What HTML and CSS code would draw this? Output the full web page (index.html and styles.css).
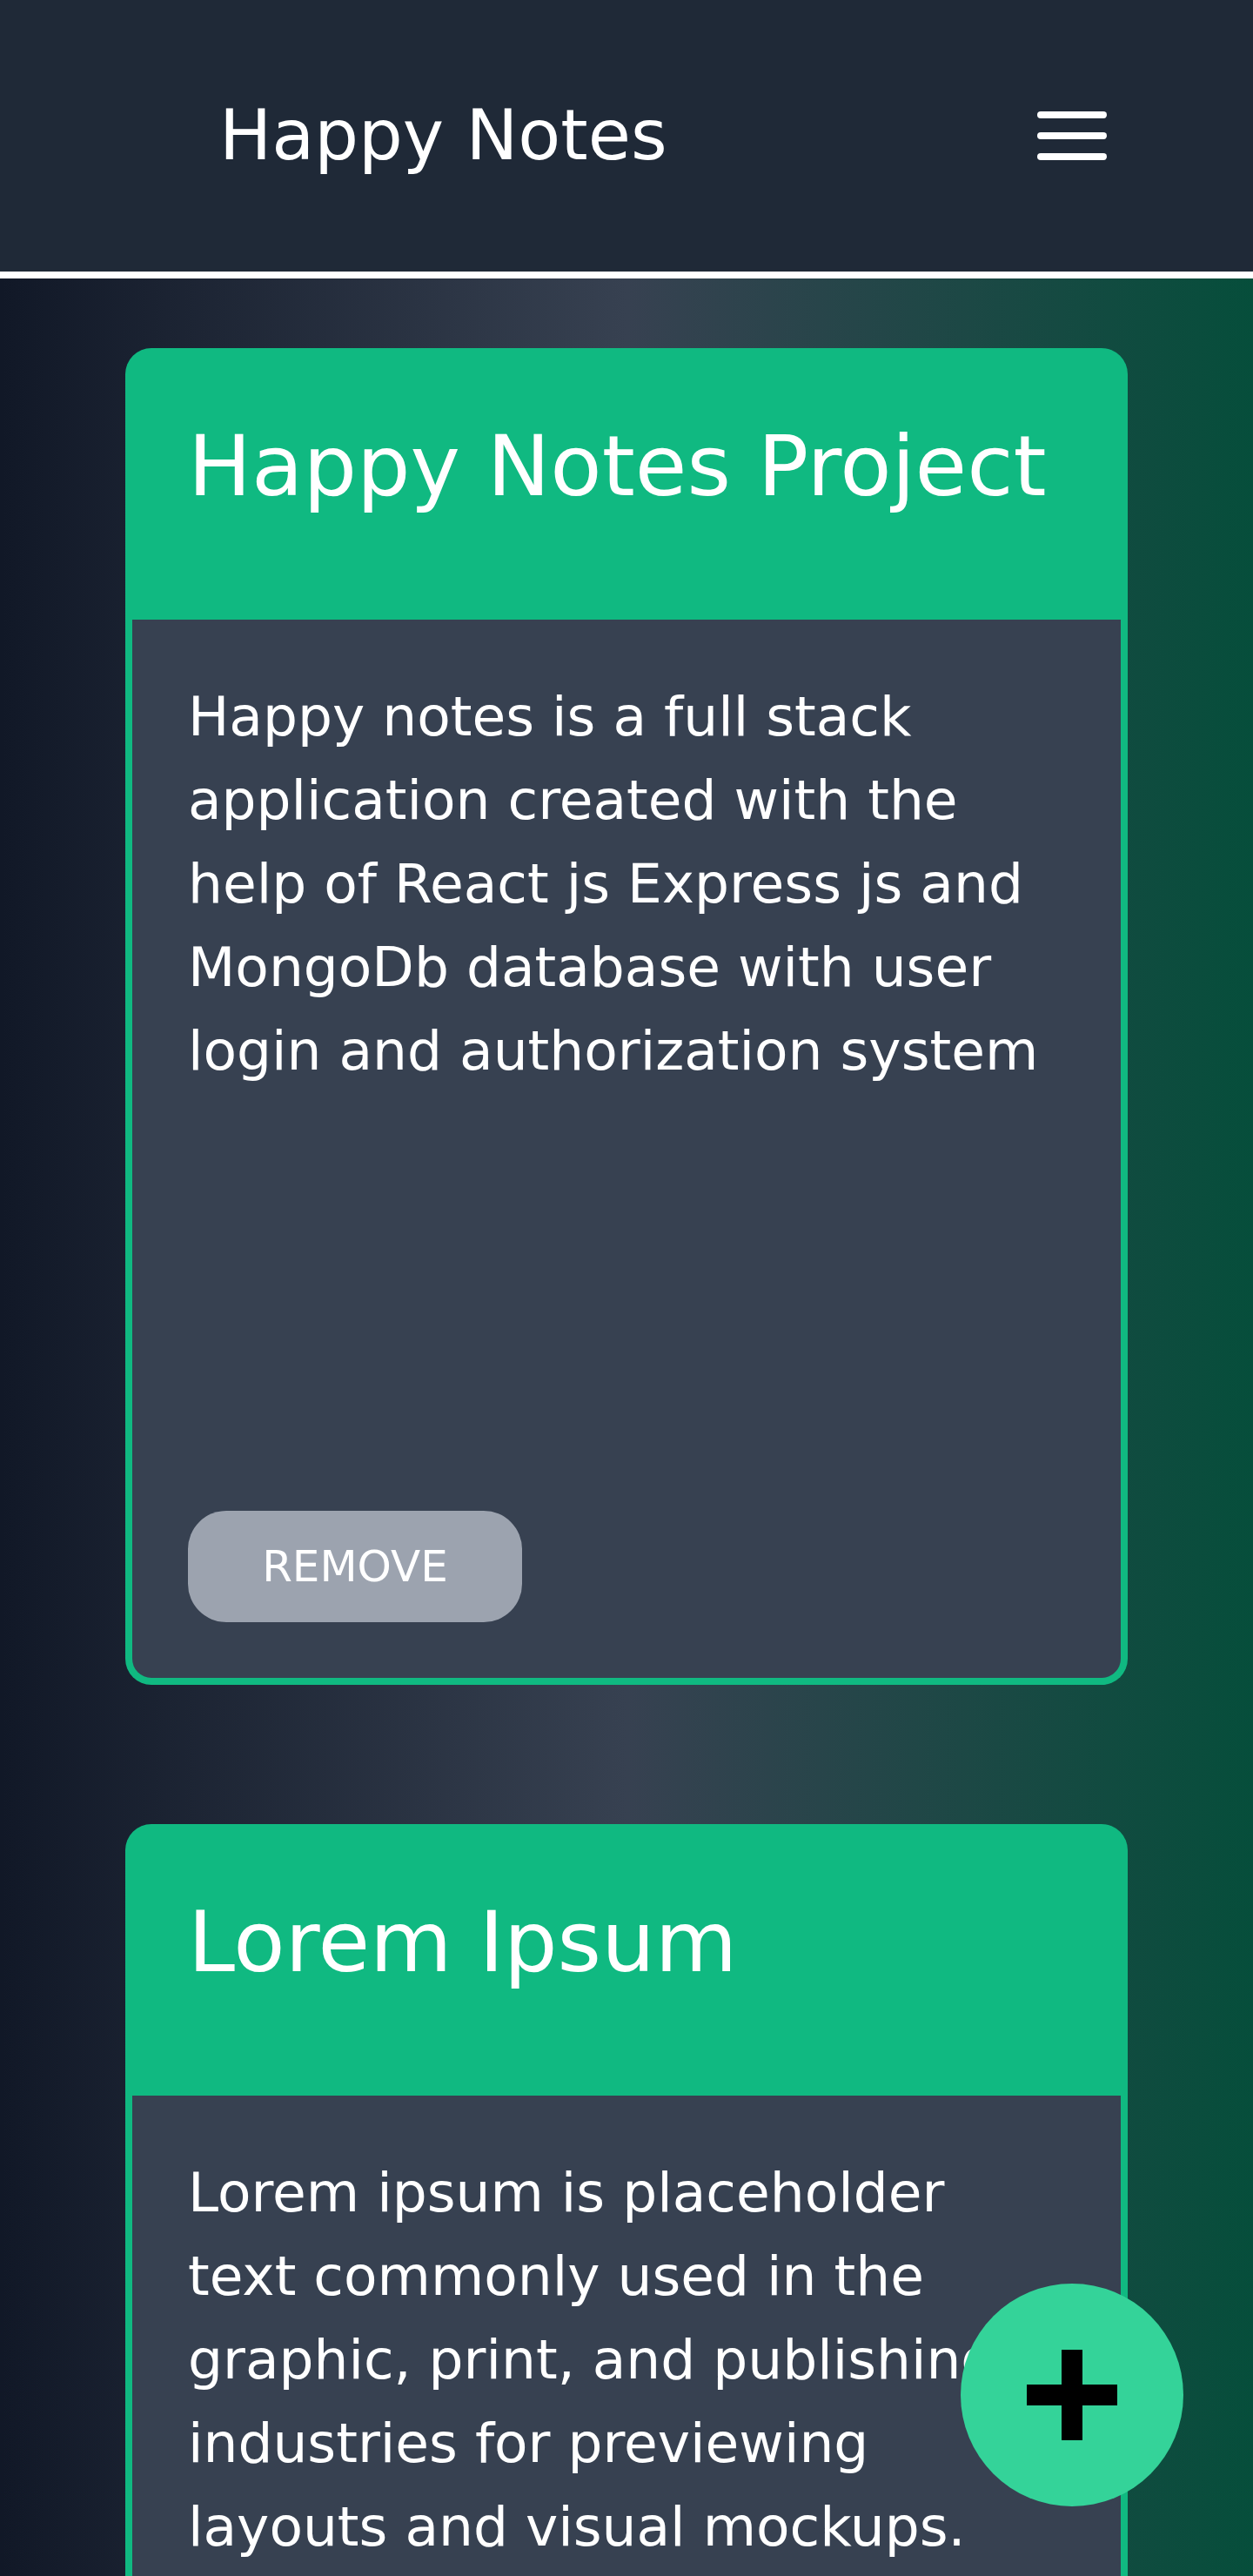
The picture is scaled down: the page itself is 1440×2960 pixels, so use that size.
FILE: index.html
```html
<!DOCTYPE html>
<html lang="en">
<head>
<meta charset="utf-8">
<title>Happy Notes</title>
<link rel="stylesheet" href="styles.css">
</head>
<body>
  <header class="topbar">
    <h1 class="brand">Happy Notes</h1>
    <button class="menu" aria-label="Menu">
      <span class="menu-bar"></span>
      <span class="menu-bar"></span>
      <span class="menu-bar"></span>
    </button>
  </header>

  <main class="notes">
    <article class="note">
      <div class="note-head">
        <h2 class="note-title">Happy Notes Project</h2>
      </div>
      <div class="note-body">
        <p class="note-text">Happy notes is a full stack application created with the help of React js Express js and MongoDb database with user login and authorization system</p>
        <button class="remove">REMOVE</button>
      </div>
    </article>

    <article class="note">
      <div class="note-head">
        <h2 class="note-title">Lorem Ipsum</h2>
      </div>
      <div class="note-body">
        <p class="note-text">Lorem ipsum is placeholder text commonly used in the graphic, print, and publishing industries for previewing layouts and visual mockups.</p>
        <button class="remove">REMOVE</button>
      </div>
    </article>
  </main>

  <button class="fab" aria-label="Add note">
    <svg width="104" height="104" viewBox="0 0 104 104">
      <rect x="0" y="40" width="104" height="24" fill="#000"/>
      <rect x="40" y="0" width="24" height="104" fill="#000"/>
    </svg>
  </button>
</body>
</html>
```

FILE: styles.css
```css
* {
  box-sizing: border-box;
}

html, body {
  margin: 0;
  padding: 0;
}

body {
  font-family: "DejaVu Sans", "Liberation Sans", sans-serif;
  color: #ffffff;
  background: linear-gradient(to right, #111827 0%, #374151 50%, #064e3b 100%);
  min-height: 2960px;
}

.topbar {
  height: 320px;
  background: #1f2937;
  border-bottom: 8px solid #ffffff;
  display: flex;
  align-items: center;
  justify-content: space-between;
  padding: 0 168px 0 252px;
}

.brand {
  margin: 0;
  font-size: 80px;
  font-weight: 400;
  line-height: 1;
  color: #ffffff;
}

.menu {
  background: none;
  border: 0;
  padding: 0;
  width: 80px;
  display: flex;
  flex-direction: column;
  gap: 16px;
  cursor: pointer;
}

.menu-bar {
  display: block;
  width: 80px;
  height: 8px;
  border-radius: 4px;
  background: #ffffff;
}

.notes {
  display: flex;
  flex-direction: column;
  align-items: center;
  gap: 160px;
  padding: 80px 0 80px;
}

.note {
  width: 1152px;
  display: flex;
  flex-direction: column;
}

.note-head {
  height: 312px;
  background: #10b981;
  border-radius: 30px 30px 0 0;
  padding: 87px 30px 0 72px;
}

.note-title {
  margin: 0;
  font-size: 97px;
  font-weight: 400;
  line-height: 1;
  color: #ffffff;
  white-space: nowrap;
}

.note-body {
  height: 1224px;
  background: #374151;
  border: 8px solid #10b981;
  border-top: 0;
  border-radius: 0 0 30px 30px;
  padding: 64px 80px 64px 64px;
  display: flex;
  flex-direction: column;
  align-items: flex-start;
}

.note-text {
  margin: 0;
  flex: 1;
  font-size: 63px;
  line-height: 96px;
  color: #ffffff;
}

.remove {
  width: 384px;
  height: 128px;
  border: 0;
  border-radius: 44px;
  background: #9ca3af;
  color: #ffffff;
  font-family: "DejaVu Sans", "Liberation Sans", sans-serif;
  font-size: 50px;
  font-weight: 400;
  padding: 0;
  cursor: pointer;
}

.fab {
  position: fixed;
  right: 80px;
  bottom: 80px;
  width: 256px;
  height: 256px;
  border-radius: 50%;
  border: 0;
  padding: 0;
  background: #34d399;
  display: flex;
  align-items: center;
  justify-content: center;
  cursor: pointer;
}

.fab svg {
  display: block;
}
```
